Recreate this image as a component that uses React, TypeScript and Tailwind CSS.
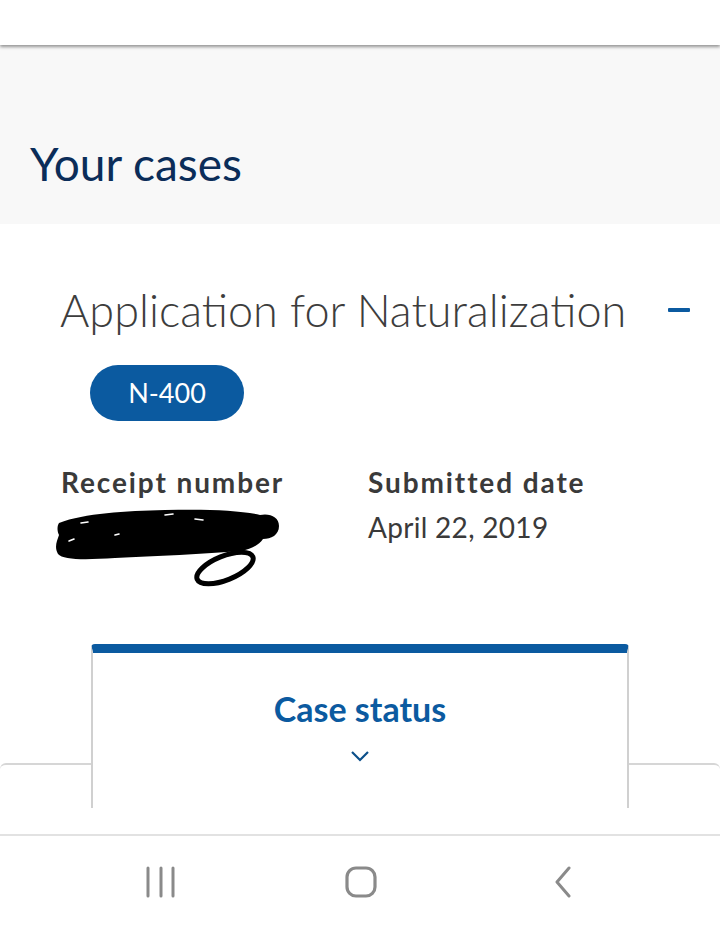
import React from "react";

function Scribble() {
  return (
    <svg width="232" height="88" viewBox="0 0 232 88" className="block">
      <path
        d="M4 18 C 30 8, 70 6, 110 5 C 150 4, 185 5, 205 10 C 215 8, 224 12, 224 21 C 224 30, 216 34, 208 34 C 204 40, 196 44, 186 46 C 150 49, 100 51, 60 53 C 30 55, 8 55, 3 49 C -1 42, 2 36, 4 30 C 2 26, 2 21, 4 18 Z"
        fill="#000"
      />
      <ellipse cx="170" cy="63" rx="30" ry="12" transform="rotate(-22 170 63)" stroke="#000" strokeWidth="5" fill="none" />
      <path d="M26 18 L33 17 M110 10 L118 9 M14 36 L19 34 M140 14 L148 15 M60 30 L64 29" stroke="#fff" strokeWidth="1.6" strokeLinecap="round" />
    </svg>
  );
}

export default function App() {
  const font = { fontFamily: 'Lato, "Noto Sans", sans-serif' };
  return (
    <div className="w-[720px] h-[930px] bg-white overflow-hidden flex flex-col" style={font}>
      <div className="h-[45px] bg-white relative z-10 shadow-[0_2px_3px_rgba(0,0,0,0.4)] shrink-0" />
      <div className="h-[179px] bg-[#f8f8f8] shrink-0 flex items-end px-[30px] pb-[34px]">
        <h1 className="text-[46px] leading-[52px] text-[#0b2d59]">Your cases</h1>
      </div>
      <div className="flex-1 flex flex-col">
        <div className="flex items-center justify-between pl-[60px] pr-[30px] pt-[62px]">
          <h2 className="text-[45px] leading-[48px] font-light text-[#3d3d3d]">Application for Naturalization</h2>
          <div className="w-[22px] h-[4px] bg-[#0b5aa0] rounded-[1px]" />
        </div>
        <div className="pl-[90px] pt-[31px]">
          <span className="inline-flex items-center justify-center w-[154px] h-[56px] rounded-full bg-[#0b5aa0] text-white text-[27px]">
            N-400
          </span>
        </div>
        <div className="flex pl-[61px] pt-[45px]">
          <div className="w-[307px]">
            <div className="text-[28px] leading-[32px] font-bold tracking-[1.9px] text-[#3a3a3a]">Receipt number</div>
            <div className="-ml-[6px] mt-[7px]">
              <Scribble />
            </div>
          </div>
          <div>
            <div className="text-[28px] leading-[32px] font-bold tracking-[1.9px] text-[#3a3a3a]">Submitted date</div>
            <div className="text-[28px] leading-[32px] tracking-[0.3px] text-[#3a3a3a] mt-[13px]">April 22, 2019</div>
          </div>
        </div>
        <div className="relative mt-auto h-[164px] shrink-0">
          <div className="absolute left-0 right-0 top-[119px] h-[20px] border-t-2 border-[#d6d6d6] rounded-t-[6px]" />
          <div className="relative mx-[91px] h-[164px] bg-white border-x-2 border-[#d0d0d0] border-t-[9px] border-t-[#0b5aa0] rounded-t-[4px] flex flex-col items-center">
            <div className="pt-[36px] text-[34px] leading-[40px] font-bold text-[#0b5aa0]">Case status</div>
            <svg width="20" height="12" viewBox="0 0 20 12" className="mt-[21px]">
              <path d="M2 2 L10 10 L18 2" stroke="#0b4f8a" strokeWidth="2.2" fill="none" />
            </svg>
          </div>
        </div>
        <div className="h-[26px] shrink-0" />
      </div>
      <div className="h-[96px] shrink-0 border-t-2 border-[#e2e2e2] flex justify-center items-start pt-[30px]">
        <svg width="32" height="32" viewBox="0 0 32 32">
          <path d="M3 2 V30 M16 2 V30 M28 2 V30" stroke="#8a8a8a" strokeWidth="3" strokeLinecap="round" />
        </svg>
        <svg width="32" height="32" viewBox="0 0 32 32" className="ml-[168px]">
          <rect x="2" y="2" width="28" height="28" rx="9" stroke="#8a8a8a" strokeWidth="3.2" fill="none" />
        </svg>
        <svg width="24" height="32" viewBox="0 0 24 32" className="ml-[174px]">
          <path d="M18 2 L6 16 L18 30" stroke="#8a8a8a" strokeWidth="3" strokeLinecap="round" strokeLinejoin="round" fill="none" />
        </svg>
      </div>
    </div>
  );
}
